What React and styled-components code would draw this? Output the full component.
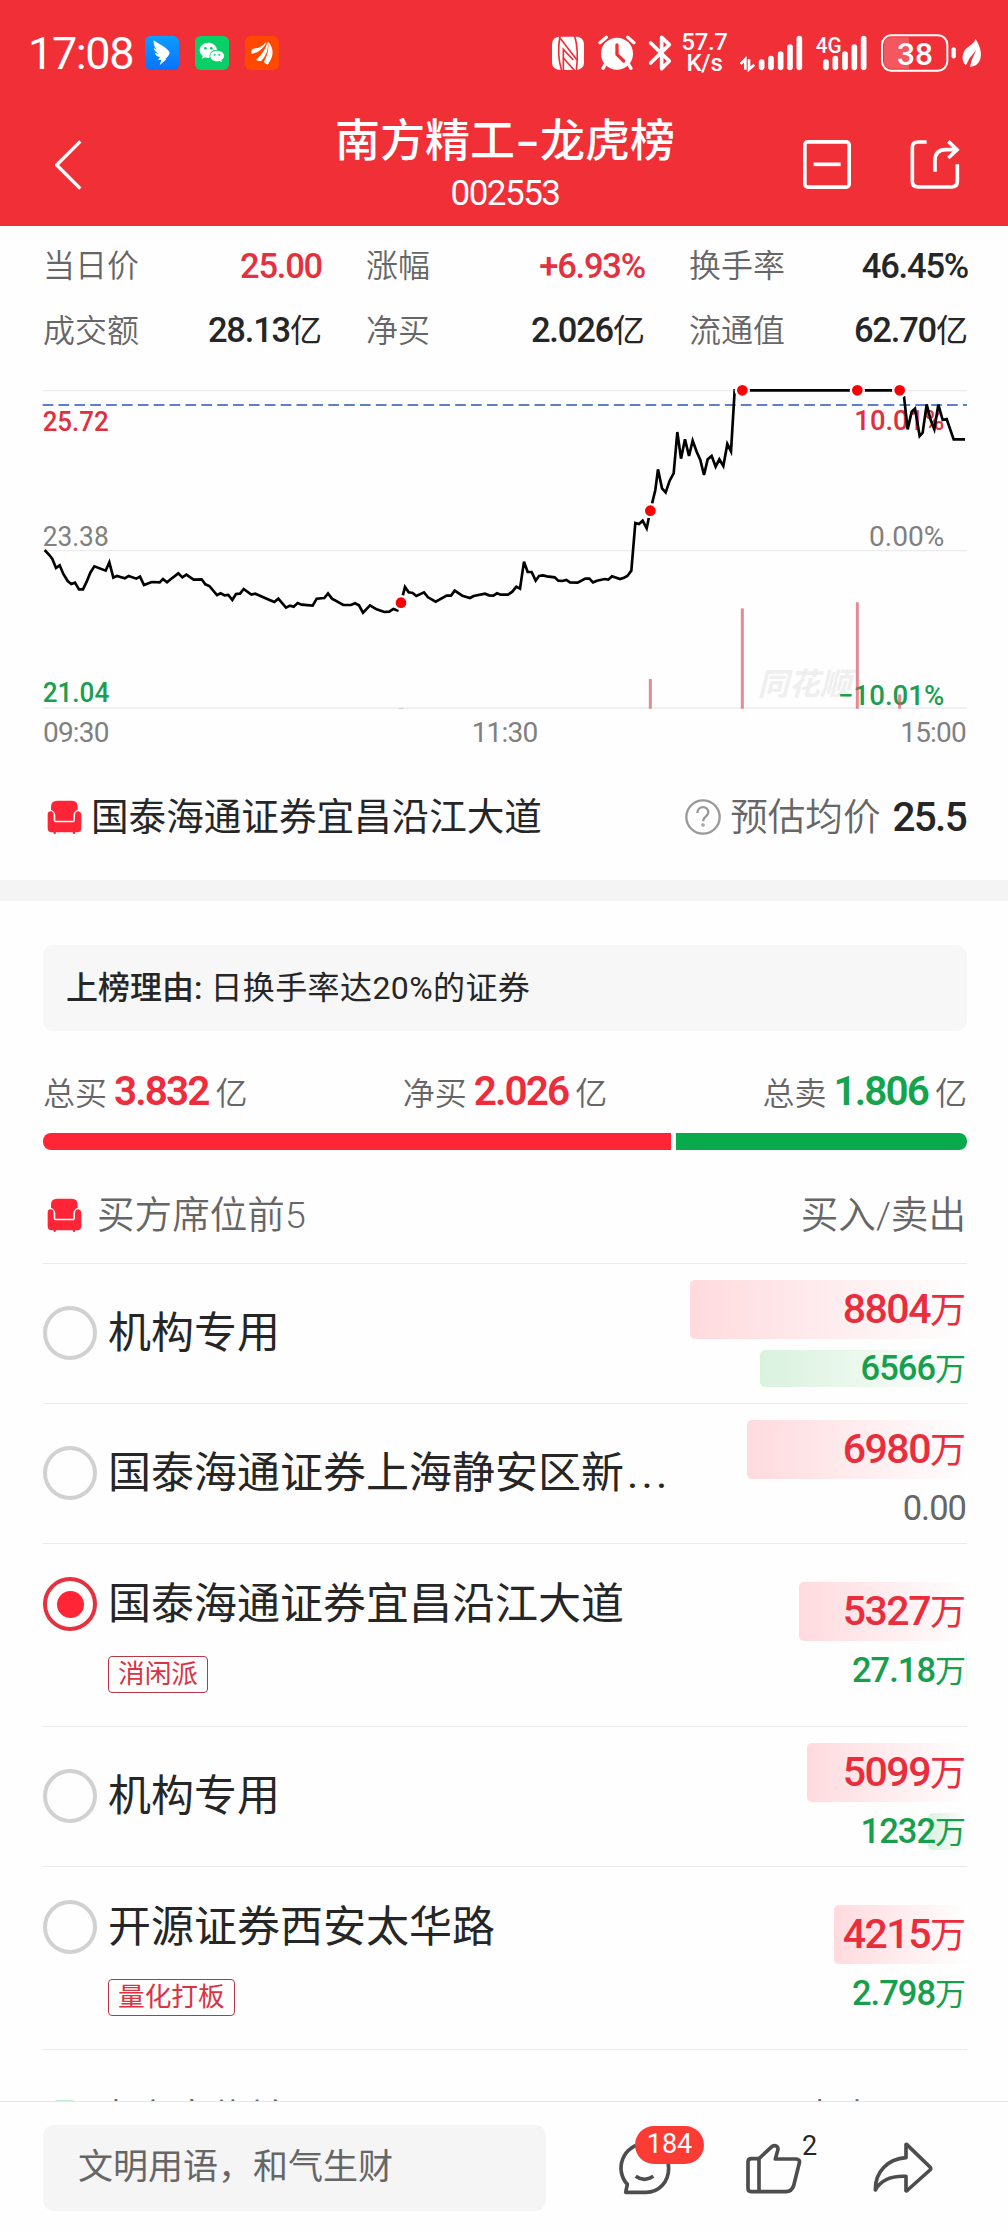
import React, { useState } from 'react'
import styled, { createGlobalStyle } from 'styled-components'

const GlobalStyle = createGlobalStyle`
   * {
      box-sizing: border-box;
   }
   body {
      margin: 0;
      background: #fefefe;
      font-family: Roboto, "Noto Sans CJK SC", sans-serif;
      color: #262626;
   }
   button {
      padding: 0;
      border: none;
      background: none;
      font: inherit;
      color: inherit;
      cursor: pointer;
   }
   svg {
      display: block;
      flex: none;
   }
`

const Page = styled.div`
   width: 1008px;
   height: 2232px;
   display: flex;
   flex-direction: column;
   overflow: hidden;
   background: #fefefe;
`

/* header */
const Header = styled.header`
   flex: none;
   height: 226px;
   background: #f12f37;
   color: #fff;
`
const StatusBar = styled.div`
   height: 106px;
   display: flex;
   justify-content: space-between;
   align-items: center;
   padding: 0 24px 0 28px;
`
const StatusGroup = styled.div`
   display: flex;
   align-items: center;
`
const Clock = styled.span`
   width: 117px;
   padding-top: 2px;
   font-size: 45px;
   line-height: 50px;
   letter-spacing: -1.4px;
   white-space: nowrap;
`
const AppIcons = styled.div`
   display: flex;
   gap: 16px;
`
const Speed = styled.div`
   width: 58px;
   padding-right: 1px;
   font-size: 24px;
   line-height: 21px;
   letter-spacing: -0.3px;
   text-align: center;
   font-weight: 500;
`
const NavBar = styled.div`
   height: 117px;
   display: grid;
   grid-template-columns: 1fr auto 1fr;
   align-items: center;
   padding: 0 48px;
`
const BackButton = styled.button`
   justify-self: start;
   margin-left: 7px;
`
const NavActions = styled.div`
   display: flex;
   justify-content: flex-end;
   gap: 59px;
`
const TitleBlock = styled.div`
   padding-left: 2px;
   text-align: center;
`
const Title = styled.h1`
   margin: 0;
   font-size: 45px;
   line-height: 50px;
   font-weight: 500;
`
const Dash = styled.span`
   display: inline-block;
   width: 25px;
   transform: scaleX(1.55);
`
const Code = styled.div`
   margin-top: 8px;
   font-size: 35px;
   line-height: 38px;
   letter-spacing: -1.5px;
`

/* stats above the chart */
const Stats = styled.section`
   flex: none;
   display: grid;
   grid-template-columns: repeat(3, 279px);
   grid-auto-rows: 65px;
   column-gap: 44px;
   padding: 7px 0 0 43px;
`
const Stat = styled.div`
   display: flex;
   justify-content: space-between;
   align-items: center;
   line-height: 48px;
`
const StatLabel = styled.span`
   font-size: 32px;
   font-weight: 350;
   color: #666;
`
const StatValue = styled.span`
   font-size: 34.5px;
   font-weight: 500;
   letter-spacing: -1.2px;
   color: ${({ $up }) => ($up ? '#e5303f' : '#262626')};
`
const Unit = styled.span`
   font-size: ${({ $size }) => $size || 32}px;
   font-weight: 400;
   letter-spacing: 0;
`

/* chart */
const Chart = styled.svg`
   margin-top: 17px;
   width: 1008px;
   height: 336px;
`
const ChartText = styled.text`
   font-size: 84px;
   fill: ${({ $color }) => $color || '#808080'};
`
const Watermark = styled.text`
   font-size: 93px;
   font-weight: 700;
   font-style: italic;
   fill: #efefef;
`
const TimeAxis = styled.div`
   flex: none;
   display: flex;
   justify-content: space-between;
   padding: 0 42px 0 43px;
   font-size: 28px;
   line-height: 34px;
   letter-spacing: -0.8px;
   color: #808080;
`
const SeatSummary = styled.div`
   flex: none;
   height: 50px;
   margin: 42px 42px 38px 43px;
   display: flex;
   align-items: center;
   font-size: 37.6px;
   line-height: 50px;
`
const SeatName = styled.span`
   flex: 1;
   margin-left: 9px;
`
const AvgLabel = styled.span`
   margin: 0 12px 0 9px;
   font-weight: 350;
   color: #666;
`
const AvgPrice = styled.span`
   font-size: 40.5px;
   font-weight: 500;
   letter-spacing: -1.7px;
`
const Divider = styled.div`
   flex: none;
   height: 21px;
   background: #f4f4f4;
`

/* reason and totals */
const Reason = styled.div`
   flex: none;
   height: 86px;
   margin: 44px 41px 0 43px;
   padding: 0 23px;
   display: flex;
   align-items: center;
   border-radius: 10px;
   background: #f7f7f7;
   font-size: 32px;
   line-height: 48px;
   white-space: pre;
`
const ReasonLabel = styled.span`
   font-weight: 500;
`
const ReasonText = styled.span`
   letter-spacing: 0.4px;
`
const Totals = styled.div`
   flex: none;
   height: 50px;
   margin: 36px 41px 0 43px;
   display: flex;
   justify-content: space-between;
   align-items: center;
`
const Total = styled.div`
   display: flex;
   align-items: baseline;
   gap: 7px;
   font-size: 32px;
   line-height: 50px;
   font-weight: 350;
   color: #666;
`
const TotalValue = styled.span`
   font-size: 40.5px;
   font-weight: 600;
   letter-spacing: -1.9px;
   color: ${({ $sell }) => ($sell ? '#14a44d' : '#ee2c3c')};
`
const Ratio = styled.div`
   flex: none;
   height: 17px;
   margin: 16px 41px 0 43px;
   display: flex;
   gap: 5px;
   border-radius: 8px;
   overflow: hidden;
`
const RatioPart = styled.div`
   flex: ${({ $weight }) => $weight} 0 0;
   background: ${({ $sell }) => ($sell ? '#09aa4c' : '#ff2436')};
`

/* seats */
const SectionHead = styled.div`
   flex: none;
   height: ${({ $height }) => $height || 114}px;
   margin: 0 41px 0 43px;
   padding: 17px 1px 0 0;
   display: flex;
   align-items: center;
   border-bottom: 1px solid #ebebeb;
   font-size: 37.6px;
   line-height: 50px;
   font-weight: 350;
   color: #666;
`
const SectionTitle = styled.span`
   flex: 1;
   margin-left: 15px;
`
const Row = styled.div`
   flex: none;
   height: ${({ $tall }) => ($tall ? 183 : 140)}px;
   margin: 0 41px 0 43px;
   display: flex;
   justify-content: space-between;
   align-items: center;
   border-bottom: 1px solid #ebebeb;
`
const RowMain = styled.button`
   display: grid;
   grid-template-columns: 54px auto;
   column-gap: 11px;
   row-gap: 24px;
   text-align: left;
`
const Radio = styled.span`
   width: 54px;
   height: 54px;
   display: flex;
   justify-content: center;
   align-items: center;
   border-radius: 50%;
   border: 4px solid ${({ $checked }) => ($checked ? '#e5303f' : '#d1d1d1')};
   &::after {
      content: '';
      width: 27px;
      height: 27px;
      border-radius: 50%;
      background: ${({ $checked }) => ($checked ? '#ff2436' : 'transparent')};
   }
`
const RowName = styled.span`
   font-size: 43px;
   line-height: 55px;
   white-space: nowrap;
`
const Dots = styled.span`
   margin-left: 3px;
   letter-spacing: 3.2px;
`
const Tag = styled.span`
   grid-column: 2;
   justify-self: start;
   height: 37px;
   padding: 0 9px;
   border: 1px solid #b83645;
   border-radius: 4px;
   font-size: 26.7px;
   line-height: 34px;
   color: #d93444;
`
const Amounts = styled.div`
   display: flex;
   flex-direction: column;
   gap: 11px;
`
const Amount = styled.div`
   width: 277px;
   height: ${({ $size }) => ($size === 'big' ? 59 : 37)}px;
   display: flex;
   justify-content: flex-end;
   align-items: center;
   position: relative;
   font-size: ${({ $size }) => ($size === 'big' ? 41 : 34.5)}px;
   line-height: 1;
   font-weight: ${({ $tone }) => ($tone === 'none' ? 400 : 500)};
   letter-spacing: ${({ $size }) => ($size === 'big' ? -1.5 : -1)}px;
   color: ${({ $tone }) => ({ buy: '#e92d3d', sell: '#169f4d', none: '#666' })[$tone]};
`
/* gradient strip lying under the number */
const Strip = styled.div`
   position: absolute;
   top: 0;
   right: 0;
   bottom: 0;
   border-radius: 5px 0 0 5px;
   background: linear-gradient(90deg, ${({ $tone }) => ($tone === 'buy' ? '#ffdade, #fefefe' : '#d9f2de, #fefefe')});
`
const AmountText = styled.span`
   position: relative;
   padding-right: 1px;
   white-space: nowrap;
`

/* bottom bar */
const Content = styled.main`
   flex: 1;
   min-height: 0;
   display: flex;
   flex-direction: column;
   overflow: hidden;
`
const BottomBar = styled.footer`
   flex: none;
   height: 131px;
   display: flex;
   align-items: flex-start;
   padding: 23px 0 0 43px;
   border-top: 1px solid #e6e6e6;
   background: #fefefe;
`
const CommentInput = styled.div`
   width: 503px;
   height: 86px;
   padding-left: 35px;
   border-radius: 11px;
   background: #f5f5f5;
   font-size: 35px;
   line-height: 85px;
   color: #666;
`
const BarButton = styled.button`
   position: relative;
   margin: 15px 0 0 ${({ $left }) => $left}px;
`
const Badge = styled.span`
   position: absolute;
   top: -14px;
   left: 18px;
   width: 69px;
   height: 38px;
   border-radius: 19px;
   background: #fb3c34;
   color: #fff;
   font-size: 27px;
   line-height: 37px;
   text-align: center;
`
const LikeCount = styled.span`
   position: absolute;
   top: -10px;
   left: 58px;
   font-size: 27px;
   line-height: 32px;
`

const stats = [
   { label: '当日价', value: '25.00', up: true },
   { label: '涨幅', value: '+6.93%', up: true },
   { label: '换手率', value: '46.45%' },
   { label: '成交额', value: '28.13', unit: '亿' },
   { label: '净买', value: '2.026', unit: '亿' },
   { label: '流通值', value: '62.70', unit: '亿' },
]

const seats = [
   { id: 1, name: '机构专用', buy: 8804, sell: 6566, sellText: '6566' },
   { id: 2, name: '国泰海通证券上海静安区新', cut: true, buy: 6980, sell: 0, sellText: '0.00' },
   { id: 3, name: '国泰海通证券宜昌沿江大道', tag: '消闲派', buy: 5327, sell: 27.18, sellText: '27.18' },
   { id: 4, name: '机构专用', buy: 5099, sell: 1232, sellText: '1232' },
   { id: 5, name: '开源证券西安太华路', tag: '量化打板', buy: 4215, sell: 2.798, sellText: '2.798' },
]

const MAX_AMOUNT = 8804
const stripWidth = value => (value / MAX_AMOUNT) * 277

// price line, three units to a pixel
const PRICE_LINE = `134,510 148,525 157,537 168,564 179,556 190,582 203,603 214,612 225,608 237,628 249,628 260,605
271,578 283,559 317,572 328,547 340,593 351,588 374,595 386,588 409,596 420,590 432,615 455,606 479,607 489,597
501,607 512,598 535,580 547,592 559,584 581,599 605,598 616,613 628,618 651,645 662,640 674,646 685,645 697,660
708,642 720,641 731,627 754,644 766,641 800,656 823,666 835,656 858,683 870,677 881,680 893,669 905,674 938,677
950,656 973,654 984,640 996,656 1030,675 1053,675 1065,670 1077,676 1089,698 1110,676 1130,688 1153,696 1168,695
1180,687 1192,691 1203,668 1215,621 1226,637 1238,639 1249,648 1272,637 1284,652 1307,665 1340,647 1353,647
1364,632 1387,647 1410,654 1421,648 1455,641 1467,646 1480,647 1491,640 1502,644 1524,644 1537,635 1549,620
1560,626 1572,545 1583,576 1595,576 1607,602 1617,588 1629,586 1641,589 1664,592 1675,602 1687,603 1699,600
1710,607 1733,608 1756,596 1768,596 1779,607 1791,602 1814,597 1825,599 1836,589 1860,597 1872,593 1882,588
1894,572 1906,429 1917,432 1928,422 1940,445 1951,392 1966,330 1974,268 1986,325 1997,337 2009,302 2021,280
2032,156 2043,236 2055,178 2067,228 2078,182 2090,215 2101,240 2112,285 2123,238 2135,228 2147,260 2158,238
2170,258 2182,192 2193,214 2204,31 2699,31 2712,50 2723,148 2735,95 2745,86 2759,168 2768,158 2780,73 2792,120
2803,148 2815,74 2828,120 2840,117 2861,178 2895,178`

const MARKS = [[1203, 668], [1951, 392], [2227, 31], [2572, 31], [2699, 31]]
const TRADES = [[1951, 897], [2227, 685], [2572, 667], [2699, 943]]

const PriceChart = () => (
   <Chart viewBox="0 0 3024 1008">
      <g stroke="#ececec" strokeWidth="4">
         <path d="M128 32H2901M128 512H2901M128 984H2901" />
      </g>
      <path d="M128 75H2901" stroke="#5d80cd" strokeWidth="6" strokeDasharray="32 15.6" />
      <Watermark x="2273" y="946" textLength="280">同花顺</Watermark>
      <ChartText x="128" y="154" textLength="198" lengthAdjust="spacingAndGlyphs" $color="#e0303e" fontWeight="500">25.72</ChartText>
      <ChartText x="128" y="498" textLength="198" lengthAdjust="spacingAndGlyphs">23.38</ChartText>
      <ChartText x="128" y="967" textLength="200" lengthAdjust="spacingAndGlyphs" $color="#1a9f50" fontWeight="500">21.04</ChartText>
      <ChartText x="2563" y="150" textLength="270" lengthAdjust="spacingAndGlyphs" $color="#e0303e" fontWeight="500">10.01%</ChartText>
      <ChartText x="2607" y="498" textLength="226" lengthAdjust="spacingAndGlyphs">0.00%</ChartText>
      <ChartText x="2514" y="976" textLength="319" lengthAdjust="spacingAndGlyphs" $color="#1a9f50" fontWeight="500">−10.01%</ChartText>
      {TRADES.map(([x, y]) => (
         <path key={x} d={`M${x} ${y}V986`} stroke="#d9525f" strokeOpacity=".68" strokeWidth="9" />
      ))}
      <path d="M1196 986h14" stroke="#ccc" strokeWidth="3" />
      <polyline points={PRICE_LINE} fill="none" stroke="#000" strokeWidth="8" />
      {MARKS.map(([x, y]) => (
         <circle key={x} cx={x} cy={y} r="19.5" fill="#fa0000" stroke="#fefefe" strokeWidth="7" />
      ))}
   </Chart>
)

const SeatIcon = ({ color = '#ff2436' }) => (
   <svg width="39" height="39" viewBox="0 0 117 117" fill={color}>
      <path d="M24 35V26Q24 8 42 8H87Q104 8 104 26V35Q92 40 91 52V68H37V52Q36 40 24 35Z" />
      <path d="M14 50Q14 40 24 40Q32 41 32 52V65Q32 73 41 73H87Q96 73 96 65V52Q97 40 106 40Q115 42 115 52V90Q115 103 103 103H97L95 108H91L89 103H39L37 108H33L31 103H26Q14 103 14 90Z" />
   </svg>
)

const bars = [[0, 178], [28, 168], [57, 154], [85, 133], [113, 108]]

const SignalBars = ({ x }) => (
   <g stroke="#fff" strokeWidth="17" strokeLinecap="round">
      {bars.map(([dx, top]) => (
         <path key={dx} d={`M${x + dx} ${top + 8}V202`} />
      ))}
   </g>
)

const StatusIcons = () => (
   <StatusGroup>
      <svg width="41.67" height="42" viewBox="135 96 125 126">
         <rect x="144" y="110" width="96" height="100" rx="22" fill="#fff" />
         <g fill="none" stroke="#f12f37" strokeWidth="5">
            <path d="M168 108C162 140 163 180 173 212" />
            <path d="M212 108C222 140 222 172 217 212" />
            <path d="M168 114L219 180" />
            <path d="M178 212V148L208 180" />
            <path d="M178 174L212 212" />
         </g>
      </svg>
      <svg width="50" height="42" viewBox="260 96 150 126">
         <path d="M287 128L306 112M389 128L370 112M307 186L296 205M369 186L380 205" stroke="#fff" strokeWidth="10" strokeLinecap="round" />
         <circle cx="338" cy="161" r="48" fill="#fff" />
         <path d="M338 135V163L358 183" fill="none" stroke="#f12f37" strokeWidth="10" strokeLinecap="round" />
      </svg>
      <svg width="35" height="42" viewBox="410 96 105 126">
         <path d="M439 129L495 183L472 206V112L495 134L439 189" fill="none" stroke="#fff" strokeWidth="11" strokeLinejoin="round" strokeLinecap="round" />
      </svg>
      <Speed>57.7<br />K/s</Speed>
      <svg width="75" height="42" viewBox="690 96 225 126">
         <path d="M710 192L724 178V209M735 178V208L751 194" fill="none" stroke="#fff" strokeWidth="8" />
         <SignalBars x={773} />
      </svg>
      <svg width="65" height="42" viewBox="915 96 195 126">
         <text x="935" y="158" fontSize="68" fontWeight="500" fill="#fff" textLength="78" lengthAdjust="spacingAndGlyphs">4G</text>
         <SignalBars x={966} />
      </svg>
      <svg width="85" height="42" viewBox="1110 96 255 126">
         <rect x="1134" y="106" width="196" height="106" rx="28" fill="none" stroke="#fff" strokeWidth="6" />
         <path d="M1215 112V206H1162Q1140 206 1140 184V134Q1140 112 1162 112Z" fill="#fff" fillOpacity=".2" />
         <text x="1179" y="195" fontSize="96" fontWeight="500" fill="#fff" textLength="108" lengthAdjust="spacingAndGlyphs">38</text>
         <path d="M1349 148V169" stroke="#fff" strokeWidth="13" strokeLinecap="round" />
      </svg>
      <svg width="25" height="42" viewBox="1365 96 75 126">
         <path d="M1414 116C1432 142 1437 172 1422 190C1415 198 1406 200 1398 200L1404 178L1417 150L1397 174L1386 196C1372 184 1372 160 1388 144C1401 134 1412 128 1414 116Z" fill="#fff" />
      </svg>
   </StatusGroup>
)

const AppBadges = () => (
   <AppIcons>
      <svg width="34" height="34" viewBox="0 0 102 102">
         <defs>
            <linearGradient id="wing" x2="0" y2="1">
               <stop stopColor="#0c9dff" />
               <stop offset="1" stopColor="#0a72ff" />
            </linearGradient>
         </defs>
         <rect width="102" height="102" rx="17" fill="url(#wing)" />
         <path d="M26 13C42 26 70 36 74 51C72 60 64 65 61 70H64L44 88L49 72H39L45 63C35 61 31 56 30 50L41 54C31 47 27 42 26 36L35 41C27 32 25 22 26 13Z" fill="#fff" />
      </svg>
      <svg width="34" height="34" viewBox="0 0 102 102">
         <rect width="102" height="102" rx="17" fill="#08d066" />
         <path d="M40 20C25 20 14 30 14 43C14 51 18 56 23 60L21 68L31 64C35 66 40 66 44 65C42 50 52 41 66 41C64 28 53 20 40 20Z" fill="#fff" />
         <path d="M66 44C54 44 46 51 46 60C46 72 60 79 73 75L81 78L79 72C96 62 86 44 66 44Z" fill="#fff" />
         <g fill="#08d066">
            <circle cx="31" cy="37" r="4" />
            <circle cx="49" cy="37" r="4" />
            <circle cx="59" cy="56" r="3" />
            <circle cx="73" cy="56" r="3" />
         </g>
      </svg>
      <svg width="34" height="34" viewBox="0 0 102 102">
         <rect width="102" height="102" rx="17" fill="#ff4800" />
         <path d="M20 54C18 48 20 41 23 38C38 37 52 32 64 17C59 36 42 48 20 54ZM33 72C47 58 62 42 67 17C72 36 66 55 49 75C44 76 38 75 33 72ZM57 77C66 60 73 42 69 17C87 35 88 61 68 86C63 84 59 81 57 77Z" fill="#fff" />
      </svg>
   </AppIcons>
)

const SeatRow = ({ seat, checked, onSelect }) => (
   <Row $tall={!!seat.tag}>
      <RowMain onClick={() => onSelect(seat.id)}>
         <Radio $checked={checked} />
         <RowName>{seat.name}{seat.cut && <Dots>...</Dots>}</RowName>
         {seat.tag && <Tag>{seat.tag}</Tag>}
      </RowMain>
      <Amounts>
         <Amount $size="big" $tone="buy">
            <Strip $tone="buy" style={{ width: stripWidth(seat.buy) }} />
            <AmountText>{seat.buy}<Unit $size={36}>万</Unit></AmountText>
         </Amount>
         <Amount $size="small" $tone={seat.sell ? 'sell' : 'none'}>
            <Strip $tone="sell" style={{ width: stripWidth(seat.sell) }} />
            <AmountText>{seat.sellText}{seat.sell > 0 && <Unit $size={31}>万</Unit>}</AmountText>
         </Amount>
      </Amounts>
   </Row>
)

const App = () => {

   const [selected, setSelected] = useState(3)

   return (
      <Page>
         <GlobalStyle />
         <Header>
            <StatusBar>
               <StatusGroup>
                  <Clock>17:08</Clock>
                  <AppBadges />
               </StatusGroup>
               <StatusIcons />
            </StatusBar>
            <NavBar>
               <BackButton>
                  <svg width="27" height="50" viewBox="0 0 81 150">
                     <path d="M76 4L5 75L76 146" fill="none" stroke="#fff" strokeWidth="10" />
                  </svg>
               </BackButton>
               <TitleBlock>
                  <Title>南方精工<Dash>-</Dash>龙虎榜</Title>
                  <Code>002553</Code>
               </TitleBlock>
               <NavActions>
                  <svg width="48" height="49" viewBox="0 0 144 147" fill="none" stroke="#fff" strokeWidth="11">
                     <rect x="5.5" y="5.5" width="133" height="136" rx="9" />
                     <path d="M32 73H113" />
                  </svg>
                  <svg width="50" height="49" viewBox="0 0 150 147" fill="none" stroke="#fff" strokeWidth="11">
                     <path d="M50 6H24Q7 6 7 22V124Q7 141 24 141H125Q142 141 142 124V73" />
                     <path d="M75 95V62Q75 29 108 29H142" />
                     <path d="M115 4L141 29L115 54" />
                  </svg>
               </NavActions>
            </NavBar>
         </Header>
         <Content>
            <Stats>
               {stats.map(item => (
                  <Stat key={item.label}>
                     <StatLabel>{item.label}</StatLabel>
                     <StatValue $up={item.up}>{item.value}{item.unit && <Unit>{item.unit}</Unit>}</StatValue>
                  </Stat>
               ))}
            </Stats>
            <PriceChart />
            <TimeAxis>
               <span>09:30</span>
               <span>11:30</span>
               <span>15:00</span>
            </TimeAxis>
            <SeatSummary>
               <SeatIcon />
               <SeatName>国泰海通证券宜昌沿江大道</SeatName>
               <svg width="36" height="36" viewBox="0 0 108 108" fill="none" stroke="#999" strokeWidth="7">
                  <circle cx="54" cy="54" r="50" />
                  <path d="M37 42C38 18 71 20 70 41C69 52 54 53 54 67" />
                  <circle cx="54" cy="78" r="2" />
               </svg>
               <AvgLabel>预估均价</AvgLabel>
               <AvgPrice>25.5</AvgPrice>
            </SeatSummary>
            <Divider />
            <Reason>
               <ReasonLabel>上榜理由: </ReasonLabel>
               <ReasonText>日换手率达20%的证券</ReasonText>
            </Reason>
            <Totals>
               <Total>总买<TotalValue>3.832</TotalValue>亿</Total>
               <Total>净买<TotalValue>2.026</TotalValue>亿</Total>
               <Total>总卖<TotalValue $sell>1.806</TotalValue>亿</Total>
            </Totals>
            <Ratio>
               <RatioPart $weight={628} />
               <RatioPart $weight={291} $sell />
            </Ratio>
            <SectionHead>
               <SeatIcon />
               <SectionTitle>买方席位前5</SectionTitle>
               <span>买入/卖出</span>
            </SectionHead>
            {seats.map(seat => (
               <SeatRow key={seat.id} seat={seat} checked={seat.id === selected} onSelect={setSelected} />
            ))}
            <SectionHead $height={119}>
               <SeatIcon color="#09aa4c" />
               <SectionTitle>卖方席位前5</SectionTitle>
               <span>卖出/买入</span>
            </SectionHead>
         </Content>
         <BottomBar>
            <CommentInput>文明用语，和气生财</CommentInput>
            <BarButton $left={71}>
               <svg width="56" height="56" viewBox="338 300 168 168" fill="none" stroke="#4d4d4d" strokeWidth="11" strokeLinejoin="round">
                  <path d="M364 457L369 433A73 73 0 0 1 420 311A73 73 0 0 1 493 384C493 425 465 457 425 457Z" />
                  <path d="M394 409Q420 427 447 409" />
               </svg>
               <Badge>184</Badge>
            </BarButton>
            <BarButton $left={71}>
               <svg width="60" height="56" viewBox="720 300 180 168" fill="none" stroke="#4d4d4d" strokeWidth="11" strokeLinejoin="round">
                  <path d="M765 356L801 322C806 317 812 315 818 319C824 323 822 330 820 335L814 357H876C884 357 888 362 886 369L869 437C865 449 858 455 846 455H742C735 455 732 451 732 445V366C732 359 736 356 742 356H765V455" />
               </svg>
               <LikeCount>2</LikeCount>
            </BarButton>
            <BarButton $left={67}>
               <svg width="64" height="56" viewBox="1100 300 192 168" fill="none" stroke="#4d4d4d" strokeWidth="11" strokeLinejoin="round">
                  <path d="M1205 314V353C1150 357 1112 395 1113 450C1130 419 1160 407 1205 409V452Q1207 454 1210 450L1277 390Q1281 385 1277 381L1210 316Q1207 312 1205 314Z" />
               </svg>
            </BarButton>
         </BottomBar>
      </Page>
   )
}

export default App
